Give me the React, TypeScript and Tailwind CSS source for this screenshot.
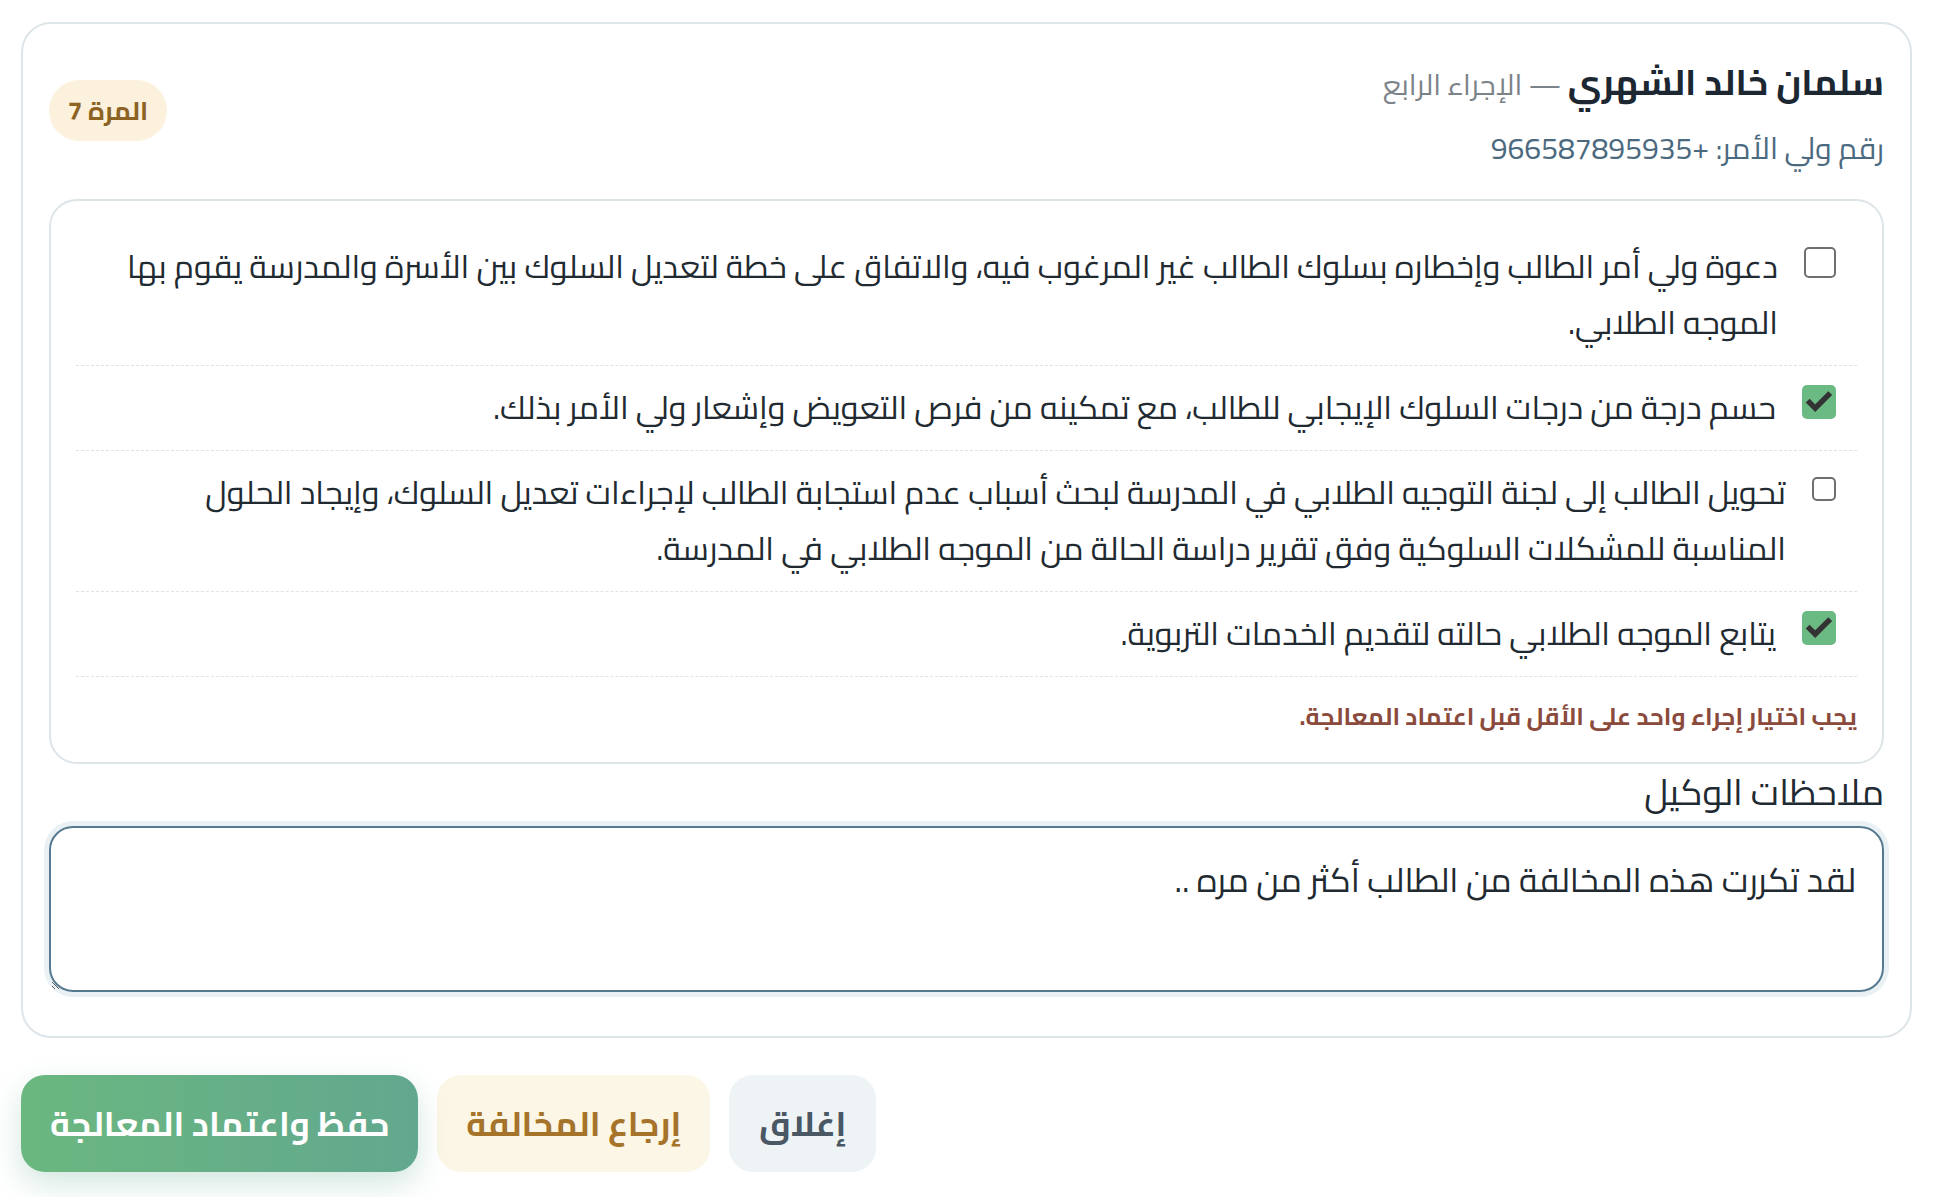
import React from 'react';

type Action = {
  id: number;
  text: string;
  checked: boolean;
  box: string; // checkbox size + offset
};

const ACTIONS: Action[] = [
  {
    id: 1,
    text: 'دعوة ولي أمر الطالب وإخطاره بسلوك الطالب غير المرغوب فيه، والاتفاق على خطة لتعديل السلوك بين الأسرة والمدرسة يقوم بها الموجه الطلابي.',
    checked: false,
    box: 'w-[32px] h-[31px] mt-[8px]',
  },
  {
    id: 2,
    text: 'حسم درجة من درجات السلوك الإيجابي للطالب، مع تمكينه من فرص التعويض وإشعار ولي الأمر بذلك.',
    checked: true,
    box: 'w-[34px] h-[34px] mt-[5px]',
  },
  {
    id: 3,
    text: 'تحويل الطالب إلى لجنة التوجيه الطلابي في المدرسة لبحث أسباب عدم استجابة الطالب لإجراءات تعديل السلوك، وإيجاد الحلول المناسبة للمشكلات السلوكية وفق تقرير دراسة الحالة من الموجه الطلابي في المدرسة.',
    checked: false,
    box: 'w-[24px] h-[24px] mt-[12px]',
  },
  {
    id: 4,
    text: 'يتابع الموجه الطلابي حالته لتقديم الخدمات التربوية.',
    checked: true,
    box: 'w-[34px] h-[34px] mt-[5px]',
  },
];

const CheckBox = ({ checked, className }: { checked: boolean; className: string }) =>
  checked ? (
    <span className={`${className} shrink-0 rounded-[5px] bg-[#6bb983] flex items-center justify-center`}>
      <svg viewBox="0 0 24 24" className="w-[88%] h-[88%]">
        <path d="M4.5 12.5l4.5 4.5L19.5 6.5" fill="none" stroke="#333" strokeWidth="4.4" strokeLinecap="square" />
      </svg>
    </span>
  ) : (
    <span className={`${className} shrink-0 rounded-[5px] border-2 border-[#6f6f6f] bg-white`} />
  );

export default function App() {
  return (
    <div dir="rtl" className="bg-white min-h-screen pt-[22px] pl-[21px] pr-[36px] font-['Cairo',sans-serif]">
      {/* main card */}
      <div className="border-2 border-[#dde5e9] rounded-[30px] px-[26px] pt-[32px] pb-[44px]">
        {/* header */}
        <div className="flex items-center justify-between">
          <div className="flex flex-col gap-[11px]">
            <div className="leading-[52px] whitespace-nowrap">
              <span className="text-[36px] font-bold text-[#1c2731]">سلمان خالد الشهري</span>
              <span className="text-[29px] text-[#7c8388]"> — الإجراء الرابع</span>
            </div>
            <div className="text-[30px] leading-[44px] text-[#4b6a80]">رقم ولي الأمر: +966587895935</div>
          </div>
          <span className="ms-[4px] mb-[5px] w-[118px] h-[61px] rounded-full bg-[#fbf1dd] text-[#8c6322] font-bold text-[26px] flex items-center justify-center">
            المرة 7
          </span>
        </div>

        {/* actions */}
        <div className="mt-[29px] border-2 border-[#dde5e9] rounded-[28px] px-[25px] pt-[24px] pb-[31px]">
          {ACTIONS.map((a) => (
            <div key={a.id} className="flex items-start gap-[26px] px-[21px] py-[14px] border-b border-dashed border-[#dde3e7]">
              <CheckBox checked={a.checked} className={a.box} />
              <p className="text-[32.4px] leading-[56px] text-[#222a31]">{a.text}</p>
            </div>
          ))}
          <p className="mt-[24px] text-[24.3px] leading-[30px] font-bold text-[#8a4a3c]">
            يجب اختيار إجراء واحد على الأقل قبل اعتماد المعالجة.
          </p>
        </div>

        {/* notes */}
        <label className="block mt-[8px] text-[36px] leading-[40px] text-[#1f2a33]">ملاحظات الوكيل</label>
        <textarea
          className="mt-[14px] block w-full h-[166px] resize-y rounded-[24px] border-2 border-[#55798f] ring-[5px] ring-[#e9f1f5] px-[26px] pt-[28px] text-[34px] leading-[48px] text-[#222a31] outline-none"
          defaultValue="لقد تكررت هذه المخالفة من الطالب أكثر من مره .."
        />
      </div>

      {/* footer buttons */}
      <div className="mt-[37px] flex justify-end gap-[19px]">
        <button className="h-[97px] px-[30px] rounded-[24px] bg-[#eef3f6] text-[#4a5764] font-bold text-[34.5px]">
          إغلاق
        </button>
        <button className="h-[97px] px-[29px] rounded-[24px] bg-[#fcf6e7] text-[#a5742a] font-bold text-[34.5px]">
          إرجاع المخالفة
        </button>
        <button className="h-[97px] px-[29px] rounded-[24px] bg-linear-to-r from-[#6bb77f] to-[#62a88f] text-white font-bold text-[34.5px] shadow-[0_12px_30px_rgba(98,168,143,0.28)]">
          حفظ واعتماد المعالجة
        </button>
      </div>
    </div>
  );
}
